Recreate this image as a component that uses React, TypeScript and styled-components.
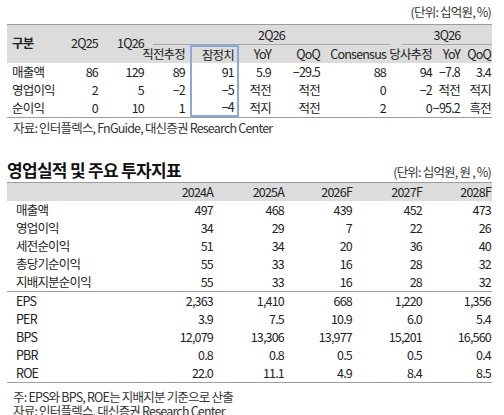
import React from 'react'
import styled, { createGlobalStyle, css } from 'styled-components'

const GlobalStyle = createGlobalStyle`
  body {
    margin: 0;
    background: #ffffff;
    font-family: 'Noto Sans CJK KR', 'Noto Sans', sans-serif;
    color: #222222;
  }
`

const BOX = '#88a9dc'
const RULE = '#9d9d9d'
const BAND = '#dcdcdc'

const Page = styled.div`
  width: 485px;
  padding: 4px 0 0 7px;
  font-size: 12.5px;
  letter-spacing: -0.8px;
`

const Unit = styled.div`
  text-align: right;
  font-size: 12.5px;
  line-height: 16px;
  padding-right: 1px;
  color: #333;
`

const QuarterHead = styled.div`
  margin-top: 4px;
  display: grid;
  grid-template-columns: 53px 42px 46px 42px 49px 36px 49px 66px 46px 28px 28px;
  grid-template-rows: 20px 18px;
  background: ${BAND};
  border-top: 1px solid ${RULE};
`

const QuarterBody = styled.div`
  display: grid;
  grid-template-columns: 53px 42px 46px 42px 49px 36px 49px 66px 46px 28px 28px;
  grid-auto-rows: 18px;
  border-bottom: 1px solid ${RULE};
`

const Cell = styled.div<{ $left?: boolean; $pr?: number; $box?: 'top' | 'mid' | 'bottom'; $bold?: boolean }>`
  display: flex;
  align-items: center;
  justify-content: ${({ $left }) => ($left ? 'flex-start' : 'flex-end')};
  padding: ${({ $left, $pr }) => ($left ? '0 0 0 5px' : `0 ${$pr ?? 4}px 0 0`)};
  white-space: nowrap;
  line-height: 16px;
  font-weight: ${({ $bold }) => ($bold ? 700 : 400)};
  ${({ $box }) =>
    $box &&
    css`
      border-left: 2px solid ${BOX};
      border-right: 2px solid ${BOX};
      padding-right: 3px;
    `}
  ${({ $box }) =>
    $box === 'top' &&
    css`
      border-top: 2px solid ${BOX};
    `}
  ${({ $box }) =>
    $box === 'bottom' &&
    css`
      border-bottom: 2px solid ${BOX};
    `}
`

const Span = styled.div<{ $col: string; $ml: number }>`
  grid-column: ${({ $col }) => $col};
  grid-row: 1;
  display: flex;
  align-items: center;
  justify-content: center;
  margin-left: ${({ $ml }) => $ml}px;
  border-bottom: 1px solid #a8a8a8;
`

const Tall = styled(Cell)`
  grid-row: 1 / 3;
  padding-bottom: 2px;
`

const Note = styled.div<{ $mt?: number }>`
  font-size: 12.5px;
  line-height: 14px;
  padding-left: 6px;
  margin-top: ${({ $mt }) => $mt ?? 0}px;
  color: #333;
`

const TitleRow = styled.div`
  margin-top: 24px;
  display: flex;
  justify-content: space-between;
  align-items: flex-end;
`

const Title = styled.div`
  font-size: 17px;
  font-weight: 700;
  letter-spacing: -0.7px;
  line-height: 22px;
  color: #111;
`

const TitleUnit = styled(Unit)`
  padding-bottom: 1px;
`

const YearGrid = styled.div<{ $head?: boolean; $rule?: 'top' | 'bottom' }>`
  display: grid;
  grid-template-columns: 140px 70px 71px 68px 70px 66px;
  grid-auto-rows: 18px;
  ${({ $head }) =>
    $head &&
    css`
      background: ${BAND};
      border-top: 1px solid ${RULE};
      margin-top: 1px;
    `}
  ${({ $rule }) =>
    $rule === 'bottom' &&
    css`
      border-bottom: 1px solid ${RULE};
    `}
`

const Label = styled(Cell)`
  padding-left: 9px;
`

const quarterRows: string[][] = [
  ['매출액', '86', '129', '89', '91', '5.9', '−29.5', '88', '94', '−7.8', '3.4'],
  ['영업이익', '2', '5', '−2', '−5', '적전', '적전', '0', '−2', '적전', '적지'],
  ['순이익', '0', '10', '1', '−4', '적지', '적전', '2', '0', '−95.2', '흑전'],
]

const years = ['2024A', '2025A', '2026F', '2027F', '2028F']

const earnings: string[][] = [
  ['매출액', '497', '468', '439', '452', '473'],
  ['영업이익', '34', '29', '7', '22', '26'],
  ['세전순이익', '51', '34', '20', '36', '40'],
  ['총당기순이익', '55', '33', '16', '28', '32'],
  ['지배지분순이익', '55', '33', '16', '28', '32'],
]

const ratios: string[][] = [
  ['EPS', '2,363', '1,410', '668', '1,220', '1,356'],
  ['PER', '3.9', '7.5', '10.9', '6.0', '5.4'],
  ['BPS', '12,079', '13,306', '13,977', '15,201', '16,560'],
  ['PBR', '0.8', '0.8', '0.5', '0.5', '0.4'],
  ['ROE', '22.0', '11.1', '4.9', '8.4', '8.5'],
]

const subHeads = ['직전추정', '잠정치', 'YoY', 'QoQ', 'Consensus', '당사추정', 'YoY', 'QoQ']

const pad = (i: number, last: number) => (i === last ? 1 : 4)

const YearRows = ({ rows }: { rows: string[][] }) => (
  <>
    {rows.map((r) =>
      r.map((v, i) =>
        i === 0 ? (
          <Label key={r[0] + i} $left>
            {v}
          </Label>
        ) : (
          <Cell key={r[0] + i} $pr={pad(i, 5)}>
            {v}
          </Cell>
        ),
      ),
    )}
  </>
)

export default function App() {
  return (
    <>
      <GlobalStyle />
      <Page>
        <Unit>(단위: 십억원, %)</Unit>
        <QuarterHead>
          <Tall $left $bold>
            구분
          </Tall>
          <Tall>2Q25</Tall>
          <Tall>1Q26</Tall>
          <Span $col="4 / 9" $ml={5}>
            2Q26
          </Span>
          <Span $col="9 / 12" $ml={12}>
            3Q26
          </Span>
          {subHeads.map((h, i) => (
            <Cell
              key={h + i}
              style={{ gridRow: 2, gridColumn: i + 4 }}
              $pr={i === 0 ? 5 : pad(i, 7)}
              $box={i === 1 ? 'top' : undefined}
            >
              {h}
            </Cell>
          ))}
        </QuarterHead>
        <QuarterBody>
          {quarterRows.map((r, ri) =>
            r.map((v, i) => (
              <Cell
                key={r[0] + i}
                $left={i === 0}
                $pr={i === 3 ? 5 : pad(i, 10)}
                $box={i === 4 ? (ri === quarterRows.length - 1 ? 'bottom' : 'mid') : undefined}
              >
                {v}
              </Cell>
            )),
          )}
        </QuarterBody>
        <Note $mt={3}>자료: 인터플렉스, FnGuide, 대신증권 Research Center</Note>

        <TitleRow>
          <Title>영업실적 및 주요 투자지표</Title>
          <TitleUnit>(단위: 십억원, 원 , %)</TitleUnit>
        </TitleRow>
        <YearGrid $head>
          <Cell />
          {years.map((y, i) => (
            <Cell key={y} $pr={pad(i + 1, 5)}>
              {y}
            </Cell>
          ))}
        </YearGrid>
        <YearGrid $rule="bottom">
          <YearRows rows={earnings} />
        </YearGrid>
        <YearGrid $rule="bottom">
          <YearRows rows={ratios} />
        </YearGrid>
        <Note $mt={7}>주: EPS와 BPS, ROE는 지배지분 기준으로 산출</Note>
        <Note>자료: 인터플렉스, 대신증권 Research Center</Note>
      </Page>
    </>
  )
}
